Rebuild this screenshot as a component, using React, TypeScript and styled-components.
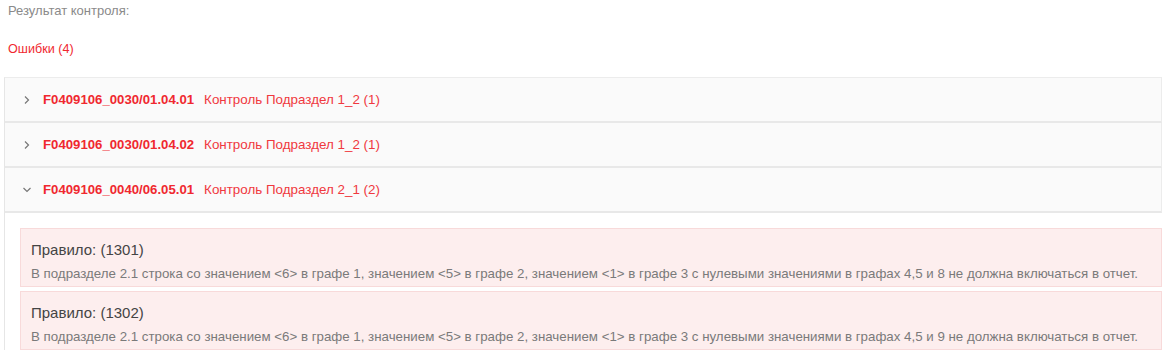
import styled, { createGlobalStyle } from 'styled-components';

const GlobalStyle = createGlobalStyle`
  body {
    margin: 0;
    background: #fff;
    font-family: 'Liberation Sans', Arial, sans-serif;
  }
`;

const Page = styled.div`
  width: 1168px;
  height: 357px;
  overflow: hidden;
  padding: 0 6px 0 4px;
  box-sizing: border-box;
`;

const Caption = styled.div`
  padding: 3px 0 0 4px;
  height: 20px;
  line-height: 16px;
  font-size: 13px;
  color: #8a8a8a;
`;

const ErrorsTitle = styled.div`
  padding: 18px 0 0 4px;
  line-height: 16px;
  font-size: 12.6px;
  color: #f0282f;
`;

const Panel = styled.div`
  margin-top: 20px;
  border-left: 1px solid #e6e6e6;
  border-top: 1px solid #ececec;
`;

const Row = styled.div`
  height: 43px;
  display: flex;
  align-items: center;
  padding-left: 17px;
  background: #fafafa;
  border-bottom: 2px solid #e8e8e8;
  border-right: 1px solid #ececec;
`;

const Chevron = styled.svg`
  width: 10px;
  height: 10px;
  margin-right: 11px;
  flex: none;
`;

const Code = styled.span`
  font-size: 13.2px;
  font-weight: 700;
  color: #f0282f;
  margin-right: 10px;
`;

const Name = styled.span`
  font-size: 13.4px;
  color: #f0383e;
`;

const Body = styled.div`
  padding: 15px 0 0 15px;
  display: flex;
  flex-direction: column;
  gap: 4px;
`;

const Rule = styled.div`
  background: #fdeeee;
  border: 1px solid #f8dada;
  padding: 11px 10px 4px;
`;

const RuleTitle = styled.div`
  font-size: 15px;
  line-height: 20px;
  color: #444;
`;

const RuleText = styled.div`
  margin-top: 6px;
  font-size: 13.3px;
  line-height: 16px;
  color: #7a7a7a;
  white-space: nowrap;
`;

type Item = { code: string; name: string; open?: boolean };

const items: Item[] = [
  { code: 'F0409106_0030/01.04.01', name: 'Контроль Подраздел 1_2 (1)' },
  { code: 'F0409106_0030/01.04.02', name: 'Контроль Подраздел 1_2 (1)' },
  { code: 'F0409106_0040/06.05.01', name: 'Контроль Подраздел 2_1 (2)', open: true },
];

const rules = [
  {
    id: '1301',
    text: 'В подразделе 2.1 строка со значением <6> в графе 1, значением <5> в графе 2, значением <1> в графе 3 с нулевыми значениями в графах 4,5 и 8 не должна включаться в отчет.',
  },
  {
    id: '1302',
    text: 'В подразделе 2.1 строка со значением <6> в графе 1, значением <5> в графе 2, значением <1> в графе 3 с нулевыми значениями в графах 4,5 и 9 не должна включаться в отчет.',
  },
];

const Arrow = ({ open }: { open?: boolean }) => (
  <Chevron viewBox="0 0 10 10">
    <polyline
      points={open ? '1.5,3 5,6.5 8.5,3' : '3,1.5 6.5,5 3,8.5'}
      fill="none"
      stroke="#777"
      strokeWidth="1.2"
    />
  </Chevron>
);

export default function App() {
  return (
    <Page>
      <GlobalStyle />
      <Caption>Результат контроля:</Caption>
      <ErrorsTitle>Ошибки (4)</ErrorsTitle>
      <Panel>
        {items.map((item) => (
          <Row key={item.code}>
            <Arrow open={item.open} />
            <Code>{item.code}</Code>
            <Name>{item.name}</Name>
          </Row>
        ))}
        <Body>
          {rules.map((r) => (
            <Rule key={r.id}>
              <RuleTitle>Правило: ({r.id})</RuleTitle>
              <RuleText>{r.text}</RuleText>
            </Rule>
          ))}
        </Body>
      </Panel>
    </Page>
  );
}
